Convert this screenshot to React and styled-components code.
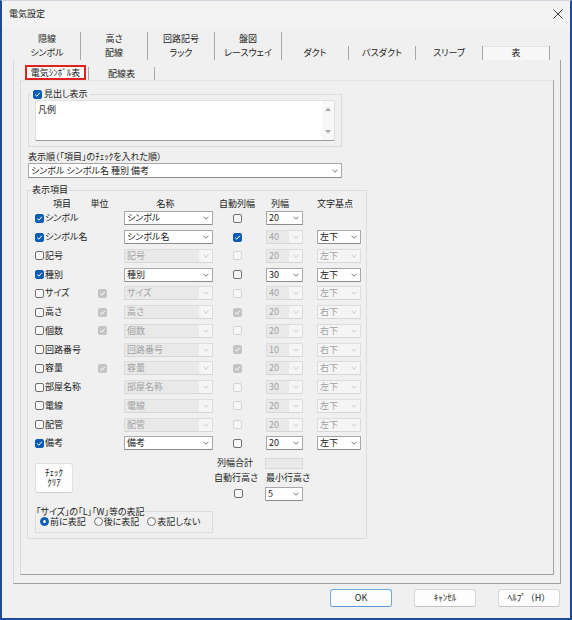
import React from 'react';
import styled, { createGlobalStyle } from 'styled-components';

const Global = createGlobalStyle`
  html, body { margin: 0; padding: 0; background: #f0f0f0; }
  body {
    font-family: "Noto Sans CJK JP", "Noto Sans", sans-serif;
    font-size: 9px;
    color: #1b1b1b;
    font-feature-settings: "palt";
  }
  * { box-sizing: border-box; }
`;

const Window = styled.div`
  width: 572px;
  height: 620px;
  background: #f0f0f0;
  border: 2px solid #1e4a9e;
  border-top: 1px solid #cfd5df;
  display: flex;
  flex-direction: column;
`;

const TitleBar = styled.div`
  height: 26px;
  flex: none;
  display: flex;
  align-items: center;
  justify-content: space-between;
  padding: 0 7px;
  background: #f3f3f3;
`;

const Title = styled.div`
  font-size: 9px;
  line-height: 10px;
`;

const Body = styled.div`
  flex: 1;
  display: flex;
  flex-direction: column;
  padding: 5px 9px 0 11px;
`;

const TabStrip = styled.div`
  margin-left: 1px;
  display: flex;
  flex-direction: column;
`;

const TabRow = styled.div`
  display: flex;
  height: 14px;
`;

const Tab = styled.div`
  width: 67px;
  height: 14px;
  display: flex;
  align-items: center;
  justify-content: center;
  line-height: 10px;
  border-right: 1px solid #a9a9a9;
  background: ${p => (p.$active ? '#f7f7f7' : 'transparent')};
  box-shadow: ${p => (p.$active ? 'inset 0 1px 0 #e4e4e4' : 'none')};
`;

const TabPage = styled.div`
  height: 524px;
  flex: none;
  display: flex;
  flex-direction: column;
  border-left: 1px solid #dadada;
  border-right: 1px solid #a0a0a0;
  border-bottom: 1px solid #a0a0a0;
  padding: 5px 6px 8px 6px;
`;

const SubTabStrip = styled.div`
  height: 15px;
  flex: none;
  display: flex;
  align-items: flex-end;
  margin-left: 5px;
`;

const SubTab = styled.div`
  height: ${p => (p.$active ? 15 : 13)}px;
  width: ${p => (p.$active ? 61 : 67)}px;
  margin-left: ${p => (p.$active ? 0 : 2)}px;
  display: flex;
  align-items: center;
  justify-content: center;
  line-height: 10px;
  white-space: nowrap;
  background: ${p => (p.$active ? '#fbfbfb' : 'transparent')};
  border: ${p => (p.$active ? '2px solid #e0221e' : 'none')};
  border-left: ${p => (p.$active ? '2px solid #e0221e' : '1px solid #a9a9a9')};
  border-right: ${p => (p.$active ? '2px solid #e0221e' : '1px solid #a9a9a9')};
`;

const InnerPage = styled.div`
  flex: 1;
  display: flex;
  flex-direction: column;
  align-items: flex-start;
  border: 1px solid;
  border-color: #e4e4e4 #a0a0a0 #a0a0a0 #dadada;
  padding: 8px 0 0 7px;
`;

const Group = styled.fieldset`
  margin: ${p => p.$mt || 0}px 0 0 ${p => p.$ml || 0}px;
  width: ${p => p.$w}px;
  border: 1px solid #dcdcdc;
  padding: ${p => p.$pad};
  min-inline-size: 0;
`;

const Legend = styled.legend`
  margin-left: ${p => p.$ml}px;
  padding: 0 ${p => p.$px}px;
  line-height: 10px;
  height: 10px;
  display: flex;
  align-items: center;
  gap: 2px;
`;

const MemoBox = styled.div`
  width: 300px;
  height: 41px;
  display: flex;
  background: #fff;
  border: 1px solid #e0e0e0;
  border-bottom-color: #9c9c9c;
`;

const MemoText = styled.div`
  flex: 1;
  padding: 3px 2px;
  line-height: 11px;
`;

const MemoScroll = styled.div`
  width: 12px;
  display: flex;
  flex-direction: column;
  align-items: center;
  justify-content: space-between;
  padding: 6px 0;
  background: #f8f8f8;
`;

const FieldLabel = styled.div`
  margin-top: 5px;
  line-height: 10px;
  height: 10px;
`;

const Narrow = styled.span`
  font-feature-settings: normal;
`;

const ComboBox = styled.div`
  margin-top: ${p => p.$mt || 0}px;
  width: ${p => p.$w}px;
  height: ${p => p.$h || 14}px;
  flex: none;
  display: flex;
  border: 1px solid ${p => (p.$disabled ? '#dcdcdc' : '#a8a8a8')};
  border-bottom-color: ${p => (p.$disabled ? '#d6d6d6' : '#8c8c8c')};
  border-radius: 1px;
  background: ${p => (p.$disabled ? '#f5f5f5' : '#fff')};
  color: ${p => (p.$disabled ? '#a2a2a2' : '#1b1b1b')};
`;

const ComboText = styled.div`
  flex: 1;
  padding-left: 2px;
  display: flex;
  align-items: center;
  white-space: nowrap;
  overflow: hidden;
  line-height: 10px;
  background: ${p => (p.$shaded ? '#e9e9e9' : 'transparent')};
`;

const ComboArrow = styled.div`
  width: 13px;
  flex: none;
  display: flex;
  align-items: center;
  justify-content: center;
`;

const BoxEl = styled.span`
  width: 9px;
  height: 9px;
  flex: none;
  display: inline-flex;
  align-items: center;
  justify-content: center;
  border-radius: 2px;
  border: 1px solid
    ${p =>
      p.$state === 'on' ? '#0b5cb5' : p.$state === 'off' ? '#707070' : p.$state === 'don' ? '#c4c4c4' : '#d4d4d4'};
  background: ${p =>
    p.$state === 'on' ? '#0b5cb5' : p.$state === 'off' ? '#f9f9f9' : p.$state === 'don' ? '#c4c4c4' : '#f6f6f6'};
`;

const RadioEl = styled.span`
  width: 9px;
  height: 9px;
  flex: none;
  border-radius: 50%;
  display: inline-flex;
  align-items: center;
  justify-content: center;
  border: 1px solid ${p => (p.$on ? '#0b5cb5' : '#707070')};
  background: ${p => (p.$on ? '#0b5cb5' : '#f9f9f9')};
`;

const RadioDot = styled.span`
  width: 3px;
  height: 3px;
  border-radius: 50%;
  background: #fff;
`;

const ItemGrid = styled.div`
  display: grid;
  grid-template-columns: 59px 17px 102px 53px 51px 44px;
  grid-template-rows: 10px;
  grid-auto-rows: 18.75px;
  align-items: center;
`;

const HeadCell = styled.div`
  margin: 0 ${p => p.$mr || 0}px 0 ${p => p.$ml || 0}px;
  text-align: center;
  line-height: 10px;
  white-space: nowrap;
`;

const ItemCell = styled.div`
  display: flex;
  align-items: center;
  gap: 1px;
  line-height: 10px;
  white-space: nowrap;
`;

const Slot = styled.div`
  display: flex;
  justify-content: ${p => p.$justify || 'flex-start'};
  padding-left: ${p => p.$pl || 0}px;
`;

const BottomArea = styled.div`
  display: flex;
`;

const LeftCol = styled.div`
  width: 178px;
  display: flex;
  flex-direction: column;
  align-items: flex-start;
`;

const ClearButton = styled.div`
  margin-top: 10px;
  width: 38px;
  height: 30px;
  display: flex;
  flex-direction: column;
  align-items: center;
  justify-content: center;
  background: #fdfdfd;
  border: 1px solid #e0e0e0;
  border-bottom-color: #cfcfcf;
  border-radius: 3px;
  line-height: 10px;
  font-feature-settings: normal;
`;

const RadioRow = styled.div`
  display: flex;
  gap: 8px;
  height: 10px;
  line-height: 10px;
`;

const RadioItem = styled.div`
  display: flex;
  align-items: center;
  gap: 1px;
  white-space: nowrap;
`;

const RightGrid = styled.div`
  margin-top: 5px;
  display: grid;
  grid-template-columns: 52px 40px;
  grid-template-rows: 11px 10px 14px;
  row-gap: 4px;
  align-items: center;
  line-height: 10px;
`;

const GridLabel = styled.div`
  justify-self: ${p => p.$justify || 'start'};
  margin: 0 ${p => p.$mr || 0}px 0 ${p => p.$ml || 0}px;
  white-space: nowrap;
  display: flex;
`;

const ReadonlyBox = styled.div`
  width: 38px;
  height: 11px;
  background: #e9e9e9;
  border: 1px solid #d8d8d8;
`;

const ButtonRow = styled.div`
  margin-top: 5px;
  display: flex;
  justify-content: flex-end;
  gap: 22px;
  padding-right: 1px;
`;

const DlgButton = styled.div`
  width: 62px;
  height: 18px;
  display: flex;
  align-items: center;
  justify-content: center;
  background: #fdfdfd;
  border: 1px solid ${p => (p.$primary ? '#72a8e0' : '#d6d6d6')};
  border-bottom-color: ${p => (p.$primary ? '#5f98d6' : '#c4c4c4')};
  border-radius: 3px;
  line-height: 10px;
  font-feature-settings: normal;
`;

const Chevron = ({ color }) => (
  <svg width="6" height="4" viewBox="0 0 6 4">
    <polyline points="0.5,0.7 3,3.2 5.5,0.7" fill="none" stroke={color} strokeWidth="0.9" />
  </svg>
);

const Combo = ({ w, h, mt, text, disabled, edit }) => (
  <ComboBox $w={w} $h={h} $mt={mt} $disabled={disabled}>
    <ComboText $shaded={disabled && edit}>{text}</ComboText>
    <ComboArrow>
      <Chevron color={disabled ? '#c4c4c4' : '#6a6a6a'} />
    </ComboArrow>
  </ComboBox>
);

const Check = ({ state }) => (
  <BoxEl $state={state}>
    {(state === 'on' || state === 'don') && (
      <svg width="7" height="7" viewBox="0 0 7 7">
        <polyline points="1.2,3.6 2.9,5.2 5.9,1.7" fill="none" stroke="#fff" strokeWidth="1" />
      </svg>
    )}
  </BoxEl>
);

const Radio = ({ on }) => <RadioEl $on={on}>{on && <RadioDot />}</RadioEl>;

const Tri = ({ up }) => (
  <svg width="6" height="4" viewBox="0 0 6 4">
    <polygon points={up ? '0,4 3,0.5 6,4' : '0,0 6,0 3,3.5'} fill="#a8a8a8" />
  </svg>
);

const CloseIcon = () => (
  <svg width="10" height="10" viewBox="0 0 10 10">
    <line x1="0.5" y1="0.5" x2="9.5" y2="9.5" stroke="#2b2b2b" strokeWidth="0.9" />
    <line x1="9.5" y1="0.5" x2="0.5" y2="9.5" stroke="#2b2b2b" strokeWidth="0.9" />
  </svg>
);

const topTabs = ['隠線', '高さ', '回路記号', '盤図'];
const mainTabs = ['シンボル', '配線', 'ラック', 'レースウェイ', 'ダクト', 'バスダクト', 'スリーブ', '表'];

const rows = [
  { item: 'シンボル', on: true, unit: false, auto: false, w: '20', base: null },
  { item: 'シンボル名', on: true, unit: false, auto: true, w: '40', base: '左下' },
  { item: '記号', on: false, unit: false, auto: false, w: '20', base: '左下' },
  { item: '種別', on: true, unit: false, auto: false, w: '30', base: '左下' },
  { item: 'サイズ', on: false, unit: true, auto: false, w: '40', base: '左下' },
  { item: '高さ', on: false, unit: true, auto: true, w: '20', base: '右下' },
  { item: '個数', on: false, unit: true, auto: false, w: '20', base: '右下' },
  { item: '回路番号', on: false, unit: false, auto: true, w: '10', base: '右下' },
  { item: '容量', on: false, unit: true, auto: true, w: '20', base: '右下' },
  { item: '部屋名称', on: false, unit: false, auto: false, w: '30', base: '左下' },
  { item: '電線', on: false, unit: false, auto: false, w: '20', base: '左下' },
  { item: '配管', on: false, unit: false, auto: false, w: '20', base: '左下' },
  { item: '備考', on: true, unit: false, auto: false, w: '20', base: '左下' },
];

export default function App() {
  return (
    <>
      <Global />
      <Window>
        <TitleBar>
          <Title>電気設定</Title>
          <CloseIcon />
        </TitleBar>
        <Body>
          <TabStrip>
            <TabRow>
              {topTabs.map(t => (
                <Tab key={t}>{t}</Tab>
              ))}
            </TabRow>
            <TabRow>
              {mainTabs.map((t, i) => (
                <Tab key={t} $active={i === mainTabs.length - 1}>
                  {t}
                </Tab>
              ))}
            </TabRow>
          </TabStrip>
          <TabPage>
            <SubTabStrip>
              <SubTab $active>
                電気<Narrow>ｼﾝﾎﾞﾙ</Narrow>表
              </SubTab>
              <SubTab>配線表</SubTab>
            </SubTabStrip>
            <InnerPage>
              <Group $w={314} $pad="1px 6px 5px 6px">
                <Legend $ml={-4} $px={2}>
                  <Check state="on" />
                  見出し表示
                </Legend>
                <MemoBox>
                  <MemoText>凡例</MemoText>
                  <MemoScroll>
                    <Tri up />
                    <Tri />
                  </MemoScroll>
                </MemoBox>
              </Group>
              <FieldLabel>
                表示順（「項目」の<Narrow>ﾁｪｯｸ</Narrow>を入れた順）
              </FieldLabel>
              <Combo w={314} h={15} mt={1} text="シンボル シンボル名 種別 備考" />
              <Group $w={340} $mt={7} $ml={-1} $pad="4px 0 5px 7px">
                <Legend $ml={-4} $px={1}>
                  表示項目
                </Legend>
                <ItemGrid>
                  <HeadCell $mr={5}>項目</HeadCell>
                  <HeadCell $ml={-6}>単位</HeadCell>
                  <HeadCell $ml={13} $mr={6}>
                    名称
                  </HeadCell>
                  <HeadCell $mr={5}>自動列幅</HeadCell>
                  <HeadCell $mr={23}>列幅</HeadCell>
                  <HeadCell $mr={10}>文字基点</HeadCell>
                  {rows.map(r => {
                    const en = r.on;
                    const autoState = r.auto ? (en ? 'on' : 'don') : en ? 'off' : 'doff';
                    return (
                      <React.Fragment key={r.item}>
                        <ItemCell>
                          <Check state={r.on ? 'on' : 'off'} />
                          {r.item}
                        </ItemCell>
                        <Slot $pl={4}>{r.unit && <Check state="don" />}</Slot>
                        <Slot $justify="flex-end">
                          <Combo w={89} text={r.item} disabled={!en} edit />
                        </Slot>
                        <Slot $pl={20}>
                          <Check state={autoState} />
                        </Slot>
                        <Slot>
                          <Combo w={37} text={r.w} disabled={!en || r.auto} edit />
                        </Slot>
                        <Slot>{r.base && <Combo w={44} text={r.base} disabled={!en} />}</Slot>
                      </React.Fragment>
                    );
                  })}
                </ItemGrid>
                <BottomArea>
                  <LeftCol>
                    <ClearButton>
                      <span>ﾁｪｯｸ</span>
                      <span>ｸﾘｱ</span>
                    </ClearButton>
                    <Group $w={178} $mt={14} $pad="0 0 5px 4px">
                      <Legend $ml={-4} $px={0}>
                        「サイズ」の「L」「W」等の表記
                      </Legend>
                      <RadioRow>
                        <RadioItem>
                          <Radio on />
                          前に表記
                        </RadioItem>
                        <RadioItem>
                          <Radio />
                          後に表記
                        </RadioItem>
                        <RadioItem>
                          <Radio />
                          表記しない
                        </RadioItem>
                      </RadioRow>
                    </Group>
                  </LeftCol>
                  <RightGrid>
                    <GridLabel $justify="end" $mr={12}>
                      列幅合計
                    </GridLabel>
                    <ReadonlyBox />
                    <GridLabel $ml={1}>自動行高さ</GridLabel>
                    <GridLabel $ml={1}>最小行高さ</GridLabel>
                    <GridLabel $ml={21}>
                      <Check state="off" />
                    </GridLabel>
                    <Combo w={38} text="5" />
                  </RightGrid>
                </BottomArea>
              </Group>
            </InnerPage>
          </TabPage>
          <ButtonRow>
            <DlgButton $primary>OK</DlgButton>
            <DlgButton>ｷｬﾝｾﾙ</DlgButton>
            <DlgButton>ﾍﾙﾌﾟ（H）</DlgButton>
          </ButtonRow>
        </Body>
      </Window>
    </>
  );
}
